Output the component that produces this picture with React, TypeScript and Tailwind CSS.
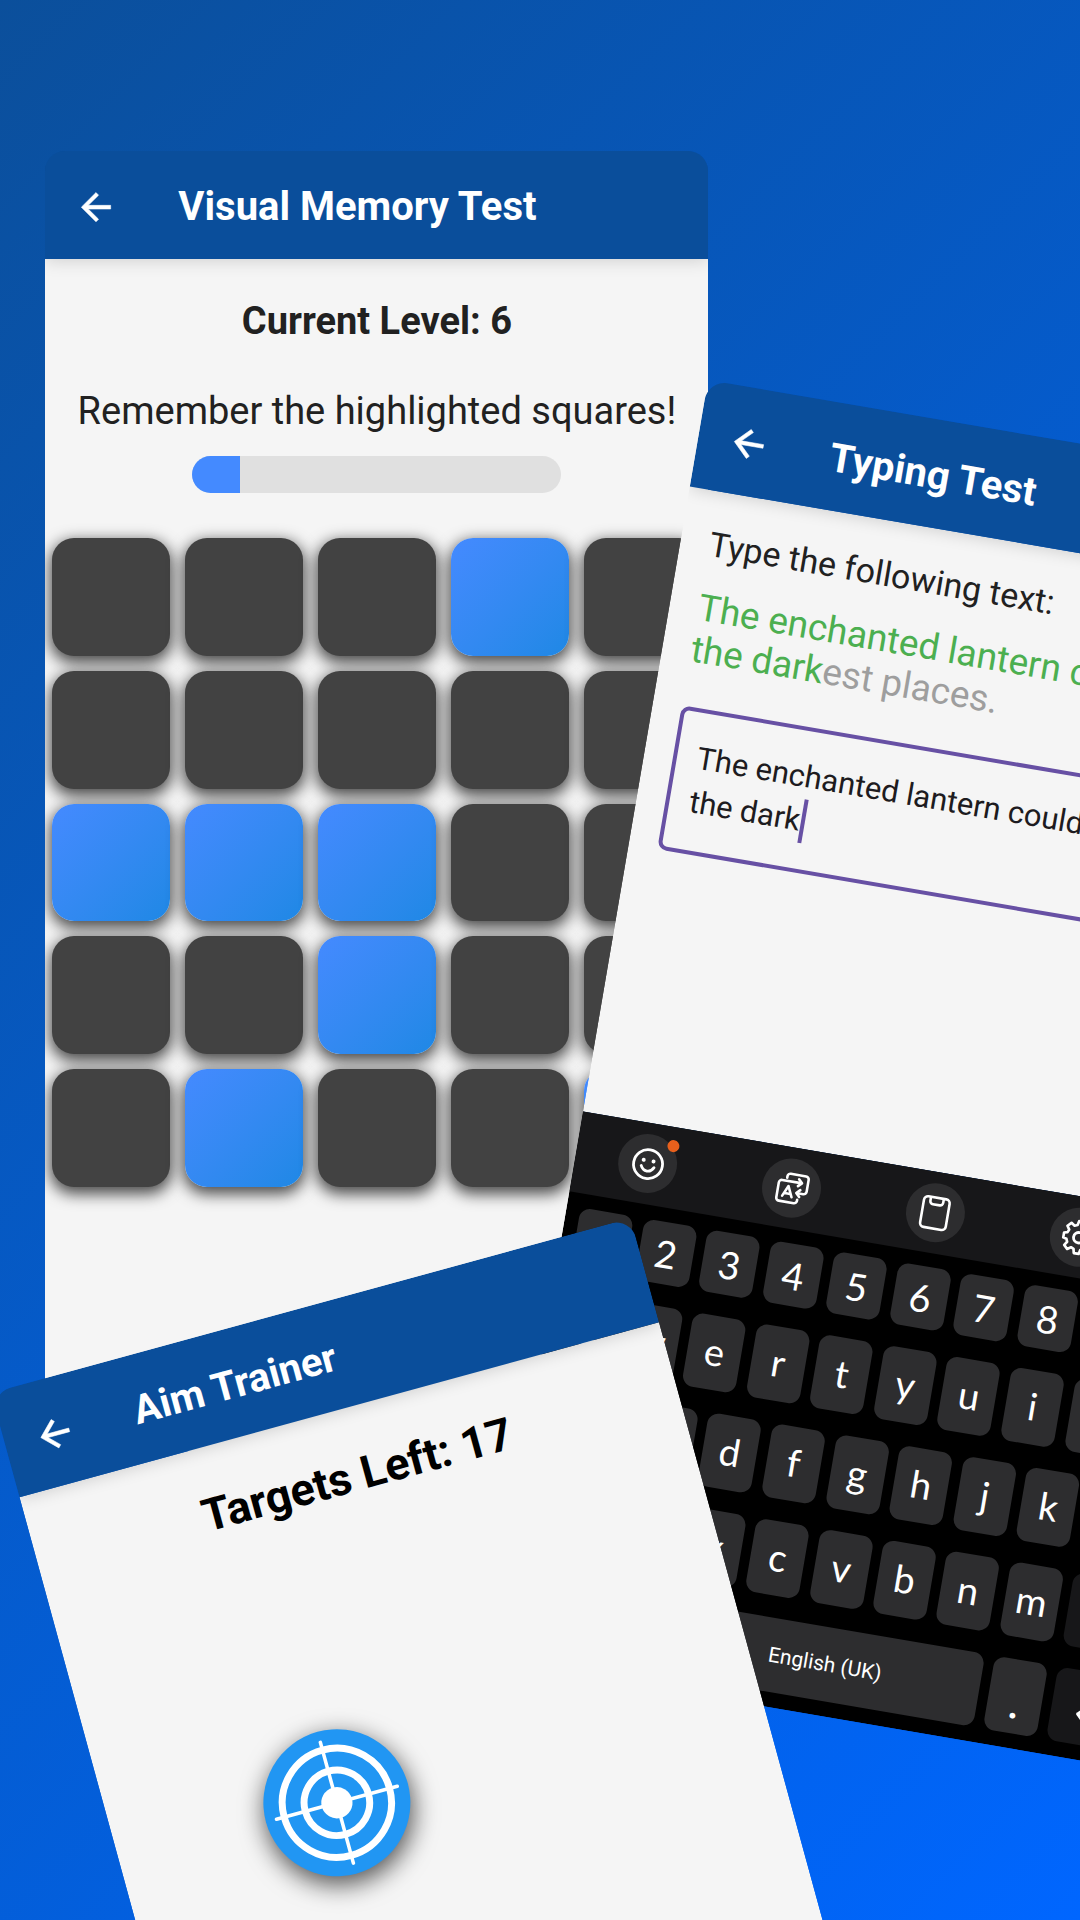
import type { ReactNode } from "react";

const TILES = [
  [0, 0, 0, 1, 0],
  [0, 0, 0, 0, 0],
  [1, 1, 1, 0, 0],
  [0, 0, 1, 0, 0],
  [0, 1, 0, 0, 1],
];

function Screen({ title, className, children }: { title: string; className: string; children: ReactNode }) {
  return (
    <section className={`absolute flex w-[61.4%] flex-col overflow-hidden rounded-t-[20px] ${className}`}>
      <header className="relative z-10 flex h-[108px] shrink-0 items-center bg-[#0a4e9b] pt-[3px] pl-[29px] shadow-[0_2px_16px_rgba(0,0,0,0.15)]">
        <button aria-label="Back" className="flex size-[44px] items-center justify-center text-white">
          <svg viewBox="0 0 24 24" className="size-[44px]" fill="currentColor">
            <path d="M20 11.100H7.800l5.600-5.550L12 4.100l-8 8 8 8 1.400-1.450-5.600-5.550H20z" stroke="currentColor" strokeWidth="0.300" />
          </svg>
        </button>
        <h1 className="ml-[60px] text-[40px] leading-[48px] font-bold text-white">{title}</h1>
      </header>
      {children}
    </section>
  );
}

function VisualMemory() {
  return (
    <Screen title="Visual Memory Test" className="left-[4.2%] top-[151px] h-[1300px]">
      <div className="flex-1 bg-[#f5f5f5]">
        <div className="flex flex-col items-center text-[#212121]">
          <p className="mt-[40px] text-[38px] leading-[44px] font-bold">Current Level: 6</p>
          <p className="mt-[46px] text-[38px] leading-[44px] whitespace-nowrap">Remember the highlighted squares!</p>
          <div
            role="progressbar"
            aria-label="Time"
            aria-valuenow={13}
            aria-valuemin={0}
            aria-valuemax={100}
            className="mt-[23px] h-[37px] w-[369px] overflow-hidden rounded-full bg-[#e0e0e0]"
          >
            <div className="h-full w-[13%] bg-[#448aff]" />
          </div>
        </div>
        <div className="mt-[45px] grid grid-cols-5 gap-[15px] px-[7px]">
          {TILES.flat().map((on, i) => (
            <button
              key={i}
              aria-label={`Square ${i + 1}`}
              className={
                on
                  ? "aspect-square rounded-[22px] bg-linear-135 from-[#448aff] to-[#1e88e5] shadow-[0_5px_15px_2px_rgba(0,0,0,0.7)]"
                  : "aspect-square rounded-[22px] bg-[#424242] shadow-[0_5px_15px_2px_rgba(0,0,0,0.7)]"
              }
            />
          ))}
        </div>
      </div>
    </Screen>
  );
}

function SmileIcon() {
  return (
    <svg viewBox="0 0 36 36" className="size-[36px]" fill="none" stroke="currentColor" strokeWidth="2.800" strokeLinecap="round">
      <circle cx="18" cy="18" r="14.500" />
      <path d="M11.500 20.500c1.500 3.200 3.800 4.600 6.500 4.600s5-1.400 6.500-4.600" />
      <circle cx="13" cy="14.500" r="2" fill="currentColor" stroke="none" />
      <circle cx="23" cy="14.500" r="2" fill="currentColor" stroke="none" />
    </svg>
  );
}

function TranslateIcon() {
  return (
    <svg viewBox="0 0 36 36" className="size-[36px]" fill="none" stroke="currentColor" strokeWidth="2.600" strokeLinecap="round" strokeLinejoin="round">
      <path d="M11.500 8V6.500a3 3 0 0 1 3-3H30a3 3 0 0 1 3 3v12a3 3 0 0 1-3 3h-6" />
      <path d="M26.500 18l-3.500 3.500 3.500 3.500" />
      <path d="M26 11H7a3 3 0 0 0-3 3v15a3 3 0 0 0 3 3h15a3 3 0 0 0 3-3v-1" />
      <path d="M23.500 7.500L27 11l-3.500 3.500" />
      <path d="M9.500 26.500l4.700-10.500L19 26.500M11.500 23.500h5.500" />
    </svg>
  );
}

function ClipboardIcon() {
  return (
    <svg viewBox="0 0 36 36" className="size-[36px]" fill="none" stroke="currentColor" strokeWidth="2.600" strokeLinecap="round" strokeLinejoin="round">
      <rect x="5" y="2.500" width="26" height="31" rx="4" />
      <path d="M11.500 3v3.500a3 3 0 0 0 3 3h7a3 3 0 0 0 3-3V3" />
    </svg>
  );
}

function GearIcon() {
  return (
    <svg viewBox="0 0 24 24" className="size-[38px]" fill="none" stroke="currentColor" strokeWidth="1.800" strokeLinejoin="round">
      <path d="M10.300 2.500h3.400l.6 2.800 1.900.8 2.400-1.600 2.400 2.400-1.600 2.400.8 1.900 2.800.6v3.400l-2.800.6-.8 1.900 1.600 2.400-2.400 2.400-2.400-1.600-1.900.8-.6 2.800h-3.400l-.6-2.800-1.900-.8-2.400 1.600L3 20.100l1.600-2.400-.8-1.900-2.300-.6v-3.400l2.300-.6.8-1.900L3 6.900l2.400-2.400 2.400 1.600 1.900-.8z" transform="translate(.9 -.700) scale(.93)" />
      <circle cx="12" cy="12" r="3.300" />
    </svg>
  );
}

function Tool({ label, badge, children }: { label: string; badge?: boolean; children: ReactNode }) {
  return (
    <button aria-label={label} className="relative flex size-[59px] items-center justify-center rounded-full bg-[#2d2d2f] text-white">
      {children}
      {badge && <span className="absolute top-[2px] right-[1px] size-[12px] rounded-full bg-[#e8601c]" />}
    </button>
  );
}

const KEY = "flex h-[74px] w-[54px] shrink-0 items-center justify-center rounded-[11px] bg-[#2d2d2f] pb-1";
const POINT_KEY = "flex h-[74px] w-[54px] shrink-0 items-end justify-center rounded-[11px] bg-[#2d2d2f] pb-2 font-bold";
const SIDE_KEY = "flex h-[74px] w-[87px] shrink-0 items-center justify-center rounded-[11px] bg-[#171719]";

function Letters({ keys }: { keys: string }) {
  return (
    <>
      {keys.split("").map((k) => (
        <button key={k} className={KEY}>
          {k}
        </button>
      ))}
    </>
  );
}

function Keyboard() {
  return (
    <div className="bg-black text-[38px] leading-[44px] text-white">
      <div className="flex h-[81px] items-center bg-[#171719] pr-[80px]">
        <div className="flex flex-1 justify-around">
          <Tool label="Emoji" badge>
            <SmileIcon />
          </Tool>
          <Tool label="Translate">
            <TranslateIcon />
          </Tool>
          <Tool label="Clipboard">
            <ClipboardIcon />
          </Tool>
          <Tool label="Settings">
            <GearIcon />
          </Tool>
        </div>
      </div>
      <div className="flex flex-col gap-[22px] px-[14px] pt-[14px] pb-[15px] font-['Lato',sans-serif]">
        <div className="flex justify-between">
          {"1234567890".split("").map((k) => (
            <button key={k} className="flex h-[62px] w-[54px] items-center justify-center rounded-[11px] bg-[#2d2d2f]">
              {k}
            </button>
          ))}
        </div>
        <div className="flex justify-between">
          <Letters keys="qwertyuiop" />
        </div>
        <div className="flex justify-between px-[32px]">
          <Letters keys="asdfghjkl" />
        </div>
        <div className="flex justify-between">
          <button aria-label="Shift" className={SIDE_KEY} />
          <Letters keys="zxcvbnm" />
          <button aria-label="Backspace" className={SIDE_KEY} />
        </div>
        <div className="flex gap-[10px]">
          <button aria-label="Symbols" className={SIDE_KEY} />
          <button className={POINT_KEY}>,</button>
          <button className="h-[74px] flex-1 rounded-[11px] bg-[#2d2d2f] font-['Roboto',sans-serif] text-[21px] leading-[24px]">
            English (UK)
          </button>
          <button className={POINT_KEY}>.</button>
          <button aria-label="Enter" className={SIDE_KEY}>
            <svg viewBox="0 0 36 36" className="size-[40px]" fill="none" stroke="currentColor" strokeWidth="3" strokeLinecap="round" strokeLinejoin="round">
              <path d="M33 8v16H3M10 17l-7 7 7 7" />
            </svg>
          </button>
        </div>
      </div>
    </div>
  );
}

function TypingTest() {
  return (
    <Screen title="Typing Test" className="left-[65.6%] top-[380px] origin-top-left rotate-[9.7deg]">
      <div className="flex h-[634px] flex-col bg-[#f5f5f5] px-[29px] pt-[31px]">
        <label htmlFor="typed" className="text-[34px] leading-[44px] text-[#212121]">
          Type the following text:
        </label>
        <p className="mt-[22px] text-[37px] leading-[42px] whitespace-pre-line text-[#9e9e9e]">
          <span className="text-[#4caf50]">{"The enchanted lantern could\nthe dark"}</span>
          est places.
        </p>
        <div className="relative mt-[36px]">
          <textarea
            id="typed"
            defaultValue={"The enchanted lantern could\nthe dark"}
            className="block h-[146px] w-full resize-none overflow-hidden rounded-[9px] border-4 border-[#6750a4] px-[20px] pt-[24px] text-[31px] leading-[44px] text-[#1d1b20] outline-none"
          />
          <span className="absolute top-[72px] left-[137px] h-[44px] w-[4px] bg-[#6750a4]" />
        </div>
      </div>
      <Keyboard />
    </Screen>
  );
}

function AimTrainer() {
  return (
    <Screen title="Aim Trainer" className="left-[-9px] top-[1393px] h-[1000px] origin-top-left rotate-[-15.3deg]">
      <div className="flex-1 bg-[#f5f5f5]">
        <p className="pt-[42px] text-center text-[45px] leading-[52px] font-bold text-black">Targets Left: 17</p>
        <button aria-label="Target" className="mt-[211px] ml-[152px] block size-[147px] rounded-full bg-[#2196f3] shadow-[0_8px_24px_1px_rgba(0,0,0,0.65)]">
          <svg viewBox="-74 -74 148 148" className="size-full" fill="none" stroke="white" strokeWidth="7">
            <circle r="55" />
            <circle r="33" />
            <circle r="15.700" fill="white" stroke="none" />
            <path d="M0-63V63M-63 0H63" strokeWidth="3.600" strokeLinecap="round" />
          </svg>
        </button>
      </div>
    </Screen>
  );
}

export default function App() {
  return (
    <main className="relative min-h-screen overflow-hidden bg-linear-135 from-[#0b4f9b] to-[#0066ff] font-['Roboto',sans-serif]">
      <VisualMemory />
      <TypingTest />
      <AimTrainer />
    </main>
  );
}
